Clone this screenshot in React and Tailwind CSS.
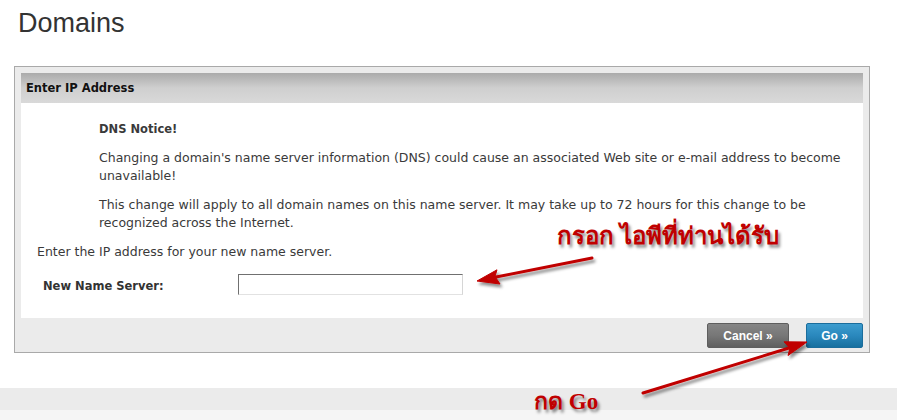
import React from "react";

const sans = { fontFamily: '"Liberation Sans", Arial, sans-serif' };
const dv = { fontFamily: '"DejaVu Sans", Verdana, sans-serif' };

function Arrows() {
  return (
    <svg
      className="absolute left-0 top-0 pointer-events-none"
      width="897"
      height="420"
      viewBox="0 0 897 420"
    >
      <defs>
        <filter id="sh" x="-20%" y="-20%" width="140%" height="160%">
          <feDropShadow dx="2" dy="3" stdDeviation="1.6" floodColor="#000" floodOpacity="0.45" />
        </filter>
      </defs>
      <g filter="url(#sh)" fill="#c00000" stroke="#c00000">
        <line x1="592" y1="258" x2="496" y2="277" strokeWidth="3" strokeLinecap="round" />
        <polygon points="477,281 500,284 495,276.5 497,269.8" strokeWidth="1" strokeLinejoin="round" />
        <line x1="643" y1="393" x2="789" y2="348" strokeWidth="3" strokeLinecap="round" />
        <polygon points="807,342 784,341.8 790,348 788,355.5" strokeWidth="1" strokeLinejoin="round" />
      </g>
    </svg>
  );
}

export default function App() {
  return (
    <div className="relative w-[897px] h-[420px] overflow-hidden bg-white text-[#333333]" style={sans}>
      <h1 className="pl-[18px] pt-[9px] h-[37px] text-[27px] leading-[28px] font-normal text-[#333333]">
        Domains
      </h1>

      <div className="mt-[29px] ml-[14px] w-[856px] border border-[#a9a9a9] bg-[#ebebeb] pt-[6px] px-[6px]" style={dv}>
        <div className="h-[30px] flex items-center pl-[5px] pt-[1px] bg-gradient-to-b from-[#ababab] via-[#cfcfcf] to-[#d9d9d9] text-[11.5px] font-bold text-[#111111]">
          Enter IP Address
        </div>

        <div className="h-[215px] bg-white pt-[17px] text-[12.5px] leading-[18.5px] text-[#3a3a3a]">
          <div className="pl-[78px]">
            <p className="font-bold text-[11.5px] mb-[10px]">DNS Notice!</p>
            <p className="mb-[10px] whitespace-nowrap">
              Changing a domain's name server information (DNS) could cause an associated Web site or e-mail address to become
              <br />
              unavailable!
            </p>
            <p className="mb-[10px] whitespace-nowrap">
              This change will apply to all domain names on this name server. It may take up to 72 hours for this change to be
              <br />
              recognized across the Internet.
            </p>
          </div>
          <p className="pl-[16px]">Enter the IP address for your new name server.</p>
          <div className="mt-[13px] flex pl-[22px] h-[21px]">
            <label className="w-[195px] font-bold text-[11.5px] pt-[2px] leading-[21px] text-[#333333]">New Name Server:</label>
            <input
              type="text"
              className="w-[225px] h-[21px] bg-white border border-t-[#707070] border-l-[#707070] border-r-[#d6d6d6] border-b-[#e2e2e2] outline-none"
            />
          </div>
        </div>

        <div className="flex justify-end gap-[17px] pt-[5px] pb-[4px]" style={sans}>
          <button className="w-[82px] h-[25px] rounded-[2px] border border-[#5e5e5e] bg-gradient-to-b from-[#868686] via-[#777777] to-[#5f5f5f] text-white text-[12px] font-bold">
            Cancel »
          </button>
          <button className="w-[57px] h-[25px] rounded-[2px] border border-[#1b6d9c] bg-gradient-to-b from-[#3c9cce] via-[#2a88bd] to-[#17709f] text-white text-[12px] font-bold">
            Go »
          </button>
        </div>
      </div>

      <div className="mt-[35px] h-[22px] bg-[#ebebeb]" />
      <div className="h-[10px] bg-[#f5f5f5]" />

      <div
        className="absolute left-[557px] top-[221px] text-[24px] leading-[30px] font-bold text-[#c00000] whitespace-nowrap [text-shadow:2px_3px_3px_rgba(0,0,0,0.45)]"
        style={{ fontFamily: '"Liberation Serif", "Times New Roman", serif' }}
      >
        กรอก ไอพีที่ท่านได้รับ
      </div>
      <div
        className="absolute left-[534px] top-[388px] text-[23px] leading-[28px] font-bold text-[#c00000] whitespace-nowrap [text-shadow:2px_3px_3px_rgba(0,0,0,0.45)]"
        style={{ fontFamily: '"Liberation Serif", "Times New Roman", serif' }}
      >
        กด Go
      </div>

      <Arrows />
    </div>
  );
}
